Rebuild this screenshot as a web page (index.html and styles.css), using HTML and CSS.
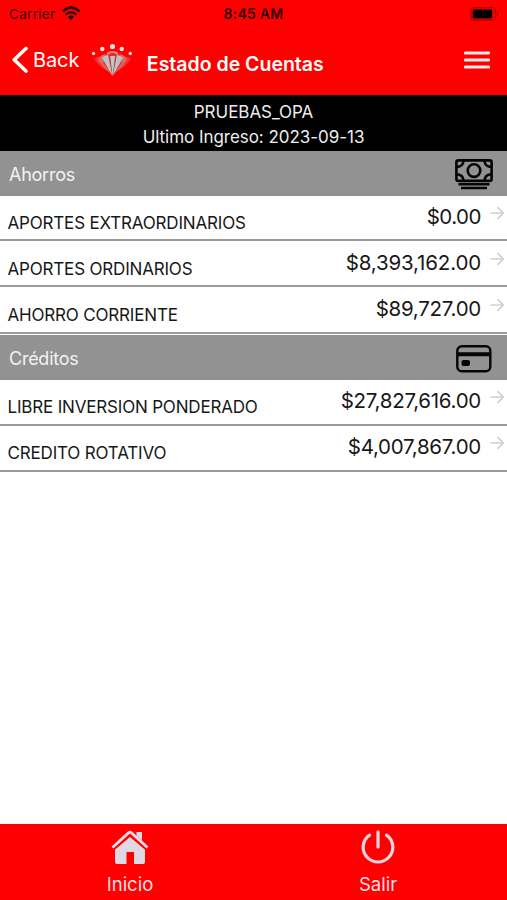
FILE: index.html
```html
<!DOCTYPE html>
<html lang="es">
<head>
<meta charset="utf-8">
<title>Estado de Cuentas</title>
<link rel="stylesheet" href="styles.css">
</head>
<body>
<svg class="defs" width="0" height="0">
  <symbol id="arrow" viewBox="0 0 14 14"><path d="M0.5 7H13M7.5 1.2L13.2 7L7.5 12.8" fill="none" stroke="#d3cfd2" stroke-width="1.7"/></symbol>
</svg>
<div class="app">
  <header>
    <div class="status">
      <div class="carrier"><span>Carrier</span>
        <svg width="20" height="15" viewBox="0 0 20 15"><g fill="none" stroke="#2a0000" stroke-width="2.5"><path d="M1.6 5.4Q10 -2.4 18.4 5.4"/><path d="M4.6 8.7Q10 3.7 15.4 8.7"/></g><path d="M6.8 10.8Q10 8.2 13.2 10.8L10 14.3Z" fill="#2a0000"/></svg>
      </div>
      <div class="time">8:45 AM</div>
      <svg class="battery" width="30" height="14" viewBox="0 0 30 14"><rect x="1" y=".8" width="24.5" height="12.4" rx="3" fill="none" stroke="#b80000" stroke-width="1.4"/><rect x="2.7" y="2.5" width="19.5" height="9" rx="1.3" fill="#000"/><path d="M27 4.5Q29.5 7 27 9.5Z" fill="#a00000"/></svg>
    </div>
    <nav>
      <svg class="chevron" width="18" height="28" viewBox="0 0 18 28"><path d="M15 2.5L3.2 13.8L15 25" fill="none" stroke="#fff" stroke-width="3.6" stroke-linecap="round" stroke-linejoin="round"/></svg>
      <span class="back">Back</span>
      <svg class="logo" width="42" height="34" viewBox="0 0 42 34">
        <g fill="#ffdede"><circle cx="2.5" cy="10.5" r="1.7"/><circle cx="11.3" cy="6" r="2.2"/><circle cx="21.5" cy="3.5" r="2.6"/><circle cx="30.7" cy="6" r="2.2"/><circle cx="39.3" cy="10.5" r="1.7"/></g>
        <path d="M3 16Q8 12 12 14L20 30Q9 25 3 16M40 16Q35 12 31 14L23 30Q34 25 40 16" fill="#f43232"/>
        <path d="M7 17Q10 11 15 11L12 20L20 31Q12 24 7 17M36 17Q33 11 28 11L31 20L23 31Q31 24 36 17" fill="#d96b6b"/>
        <path d="M14 13Q21.5 8 29 13L21.5 33Z" fill="#d93232"/>
        <path d="M11 14.5L17 11.5L21.3 33ZM32 14.5L26 11.5L21.7 33Z" fill="#b9c5c5"/>
        <path d="M19.2 13L24 13L21.6 33Z" fill="#bcc9c9"/>
        <path d="M16 11Q21.5 7 27 11" fill="none" stroke="#ff8585" stroke-width="2"/>
      </svg>
      <h1>Estado de Cuentas</h1>
      <svg class="menu" width="26" height="18" viewBox="0 0 26 18"><path d="M1.5 2H24.5M1.5 9H24.5M1.5 16H24.5" stroke="#ffe9e9" stroke-width="3.2" stroke-linecap="round"/></svg>
    </nav>
  </header>
  <div class="user"><div class="name">PRUEBAS_OPA</div><div class="last">Ultimo Ingreso: 2023-09-13</div></div>
  <main>
    <section class="savings">
      <h2><span>Ahorros</span>
        <svg class="cash" width="38" height="31" viewBox="0 0 38 31"><g fill="none" stroke="#050505" stroke-width="2.6"><rect x="1.4" y="1.4" width="35.2" height="20.5" rx="2"/><circle cx="19" cy="11.6" r="6.3"/><path d="M2 8Q8 7.5 8.5 2M36 8Q30 7.5 29.5 2M2 15.2Q8 15.7 8.5 21.3M36 15.2Q30 15.7 29.5 21.3"/><path d="M3.5 25.2H34.5M6 29H32" stroke-width="2.4"/></g></svg>
      </h2>
      <div class="row first"><span class="label">APORTES EXTRAORDINARIOS</span><span class="amount a1">$0.00</span><svg class="arrow"><use href="#arrow"/></svg></div>
      <div class="row"><span class="label">APORTES ORDINARIOS</span><span class="amount a2">$8,393,162.00</span><svg class="arrow"><use href="#arrow"/></svg></div>
      <div class="row"><span class="label">AHORRO CORRIENTE</span><span class="amount">$89,727.00</span><svg class="arrow"><use href="#arrow"/></svg></div>
    </section>
    <section class="credits">
      <h2><span>Créditos</span>
        <svg class="card" width="36" height="28" viewBox="0 0 36 28"><rect x="1.3" y="1.3" width="33" height="25" rx="4.5" fill="none" stroke="#050505" stroke-width="2.4"/><path d="M1 9.2H35" stroke="#050505" stroke-width="4"/><rect x="5.5" y="15" width="8.5" height="6" rx="2" fill="#050505"/></svg>
      </h2>
      <div class="row"><span class="label">LIBRE INVERSION PONDERADO</span><span class="amount">$27,827,616.00</span><svg class="arrow"><use href="#arrow"/></svg></div>
      <div class="row"><span class="label">CREDITO ROTATIVO</span><span class="amount">$4,007,867.00</span><svg class="arrow"><use href="#arrow"/></svg></div>
    </section>
  </main>
  <footer>
    <div class="tab home"><svg width="38" height="36" viewBox="0 0 38 36"><path d="M25.5 2H31V13L25.5 8Z" fill="#e0d9e4"/><path d="M4 19.5L19 7L34 19.5V32Q34 34 32 34H23V22H15.5V34H6Q4 34 4 32Z" fill="#e0d9e4"/><path d="M1.5 18.5L17.5 4.4Q19 3.2 20.5 4.4L36.5 18.5" fill="none" stroke="#f00" stroke-width="4.6"/><path d="M1.5 17.5L17.5 2.9Q19 1.7 20.5 2.9L36.5 17.5" fill="none" stroke="#e8dce5" stroke-width="2.8"/></svg><span>Inicio</span></div>
    <div class="tab exit"><svg width="34" height="36" viewBox="0 0 34 36"><path d="M8.5 5.1A14.8 14.8 0 1 0 25.5 5.1M17 1.8V17" fill="none" stroke="#ffd3e2" stroke-width="3.2" stroke-linecap="round"/></svg><span>Salir</span></div>
  </footer>
</div>
</body>
</html>
```
FILE: styles.css
```css
* { box-sizing: border-box; }
body { margin: 0; font-family: Inter, "Liberation Sans", sans-serif; }
.defs { display: none; }
.app { width: 507px; height: 900px; display: flex; flex-direction: column; background: #fff; overflow: hidden; }
span, h1, .time, .name, .last { white-space: nowrap; }
header { height: 95px; background: #f00; }
.status { height: 27px; display: grid; grid-template-columns: 1fr auto 1fr; align-items: center; padding: 0 7px 0 9px; color: #390000; font-size: 13.5px; }
.carrier { display: flex; align-items: center; gap: 6px; letter-spacing: .3px; }
.time { font-weight: 600; font-size: 14px; letter-spacing: .25px; color: #300000; margin-right: 2px; }
.battery { justify-self: end; }
nav { height: 68px; display: flex; align-items: flex-start; color: #fff; }
.chevron { margin: 19px 0 0 11px; }
.back { margin: 21px 0 0 4px; font-size: 20px; line-height: 24px; letter-spacing: -.1px; }
.logo { margin: 16px 0 0 12px; }
h1 { margin: 25px 0 0 13.5px; font-size: 19.5px; line-height: 24px; font-weight: 600; }
.menu { margin: 24px 17px 0 auto; }
.user { height: 56px; padding-top: 5px; background: #000; color: #ededed; text-align: center; font-size: 17px; line-height: 25px; letter-spacing: -.04px; }
.name, .last { height: 24.5px; }
h2 { height: 45px; margin: 0; padding: 2px 14px 0 9px; display: flex; align-items: center; justify-content: space-between; background: #929292; color: #f2f2f2; font-size: 18px; font-weight: 400; letter-spacing: -.25px; }
.cash { margin-top: -1px; }
.card { margin: 0 1px 0 0; }
.row { height: 46.2px; display: flex; align-items: flex-start; padding: 0 3px 0 7.5px; border-bottom: 2px solid #9a9a9a; color: #181818; }
.savings .row { height: 46.4px; padding-top: 1px; }
.savings .first { height: 45px; padding-top: 0; }
.label { padding-top: 16px; font-size: 17px; line-height: 22px; letter-spacing: -.18px; }
.amount { margin-left: auto; padding-top: 8px; font-size: 20.5px; line-height: 25px; letter-spacing: -.27px; }
.a1 { letter-spacing: -.5px; }
.a2 { letter-spacing: -.15px; }
.arrow { width: 14px; height: 14px; margin: 10px 0 0 9px; flex: none; }
.credits { padding-top: 1.2px; }
.credits h2 { height: 45.5px; }
.credits .row { height: 46px; }
footer { margin-top: auto; height: 76px; display: flex; background: #f00; color: #ffdfe5; font-size: 18.5px; line-height: 22px; }
.tab { display: flex; flex-direction: column; align-items: center; padding-top: 6px; }
.tab svg { margin-bottom: 7px; }
.home { width: 260px; }
.exit { width: 236px; }
```
